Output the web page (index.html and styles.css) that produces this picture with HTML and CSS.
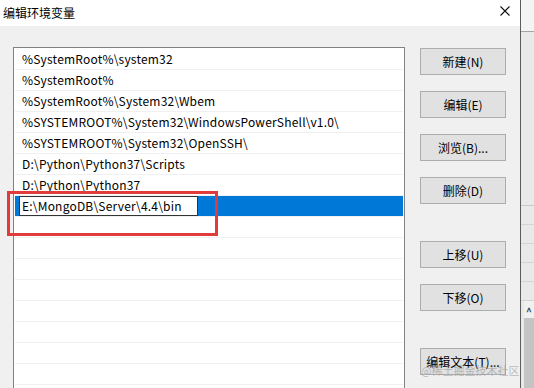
FILE: index.html
```html
<html lang="zh-CN">

<head>
    <meta charset="utf-8">
    <title>编辑环境变量</title>
    <link rel="stylesheet" href="styles.css">
</head>

<body>
    <div class="screen">
        <div class="dialog">
            <div class="titlebar">
                <span class="title">编辑环境变量</span>
                <svg class="close" width="10" height="10" viewBox="0 0 10 10">
                    <path d="M0.5 0.5 L9.5 9.5 M9.5 0.5 L0.5 9.5" stroke="#111" stroke-width="1.1" fill="none" />
                </svg>
            </div>
            <div class="dialog-body">
                <!--Path list-->
                <div class="pathlist">
                    <div class="row">%SystemRoot%\system32</div>
                    <div class="row">%SystemRoot%</div>
                    <div class="row">%SystemRoot%\System32\Wbem</div>
                    <div class="row">%SYSTEMROOT%\System32\WindowsPowerShell\v1.0\</div>
                    <div class="row">%SYSTEMROOT%\System32\OpenSSH\</div>
                    <div class="row">D:\Python\Python37\Scripts</div>
                    <div class="row">D:\Python\Python37</div>
                    <div class="row selected">
                        <div class="editbox">E:\MongoDB\Server\4.4\bin</div>
                    </div>
                    <div class="row"></div>
                    <div class="row"></div>
                    <div class="row"></div>
                    <div class="row"></div>
                    <div class="row"></div>
                    <div class="row"></div>
                    <div class="row"></div>
                    <div class="row"></div>
                    <div class="row"></div>
                </div>

                <!--Buttons-->
                <div class="buttons">
                    <div class="group">
                        <button class="btn">新建(N)</button>
                        <button class="btn">编辑(E)</button>
                        <button class="btn">浏览(B)...</button>
                        <button class="btn">删除(D)</button>
                    </div>
                    <div class="group">
                        <button class="btn">上移(U)</button>
                        <button class="btn">下移(O)</button>
                    </div>
                    <div class="group">
                        <button class="btn">编辑文本(T)...</button>
                    </div>
                </div>
            </div>
        </div>

        <!--Window behind the dialog-->
        <div class="backwin">
            <div class="bw-top"></div>
            <div class="bw-mid"></div>
            <div class="bw-line"></div>
            <div class="bw-line"></div>
            <div class="bw-line"></div>
            <div class="bw-line"></div>
            <div class="bw-line"></div>
            <div class="bw-scroll">
                <div class="bw-arrow">^</div>
                <div class="bw-thumb"></div>
            </div>
        </div>

        <div class="highlight"></div>
        <div class="watermark">@稀土掘金技术社区</div>
    </div>
</body>

</html>
```

FILE: styles.css
```css
body {
    margin: 0;
    font-family: "Noto Sans CJK SC", "Liberation Sans", sans-serif;
    font-size: 12px;
    color: #000;
}

/*This section sets the page and the dialog frame.*/
div.screen {
    position: relative;
    display: flex;
    width: 534px;
    height: 388px;
    overflow: hidden;
}

div.dialog {
    width: 520px;
    flex-shrink: 0;
    border-right: 1px solid #5c5c5c;
    background: #f0f0f0;
    display: flex;
    flex-direction: column;
    overflow: hidden;
}

div.titlebar {
    height: 26px;
    flex-shrink: 0;
    background: white;
    display: flex;
    align-items: center;
    padding-left: 3px;
    box-sizing: border-box;
}

span.title {
    flex: 1;
    margin-top: -2px;
}

svg.close {
    margin-right: 10px;
    margin-top: -4px;
}

div.dialog-body {
    display: flex;
    padding: 21px 0 0 13px;
    flex-shrink: 0;
}

/*This section sets the path list.*/
div.pathlist {
    width: 388px;
    height: 360px;
    border: 1px solid #828282;
    background: white;
    padding: 1px;
    flex-shrink: 0;
}

div.row {
    height: 20px;
    line-height: 20px;
    border-bottom: 1px solid #f0f0f0;
    padding-left: 7px;
    white-space: nowrap;
    letter-spacing: 0.2px;
}

div.row.selected {
    background: #0078d7;
    padding-left: 4px;
}

div.editbox {
    width: 175px;
    height: 18px;
    line-height: 18px;
    border: 1px solid #333;
    background: white;
    padding-left: 2px;
}

/*This section sets the buttons.*/
div.buttons {
    margin-left: 15px;
    padding-top: 1px;
    display: flex;
    flex-direction: column;
}

div.group {
    display: flex;
    flex-direction: column;
    gap: 16px;
    margin-bottom: 37px;
}

button.btn {
    width: 86px;
    height: 27px;
    background: #e1e1e1;
    border: 1px solid #adadad;
    font-family: inherit;
    font-size: 12px;
    color: #000;
    padding: 0;
}

/*This section sets the window behind the dialog.*/
div.backwin {
    flex: 1;
    background: #e9e9e9;
    display: flex;
    flex-direction: column;
}

div.bw-top {
    height: 31px;
    flex-shrink: 0;
    background: #f4f4f4;
    border-bottom: 1px solid #a4a4a4;
}

div.bw-mid {
    height: 173px;
    flex-shrink: 0;
    border-bottom: 1px solid #c9c9c9;
}

div.bw-line {
    height: 18px;
    flex-shrink: 0;
    border-bottom: 1px solid #d4d4d4;
}

div.bw-scroll {
    flex: 1;
    margin-left: 3px;
    background: #f0f0f0;
    display: flex;
    flex-direction: column;
}

div.bw-arrow {
    height: 17px;
    line-height: 20px;
    font-size: 10px;
    font-weight: bold;
    color: #444;
    text-align: center;
}

div.bw-thumb {
    flex: 1;
    background: #c4c4c4;
}

/*This section sets the annotation overlays.*/
div.highlight {
    position: absolute;
    left: 7px;
    top: 191px;
    width: 205px;
    height: 39px;
    border: 3px solid #e03c3c;
}

div.watermark {
    position: absolute;
    left: 421px;
    top: 362px;
    font-size: 11px;
    color: rgba(140, 140, 140, 0.55);
    white-space: nowrap;
}
```
